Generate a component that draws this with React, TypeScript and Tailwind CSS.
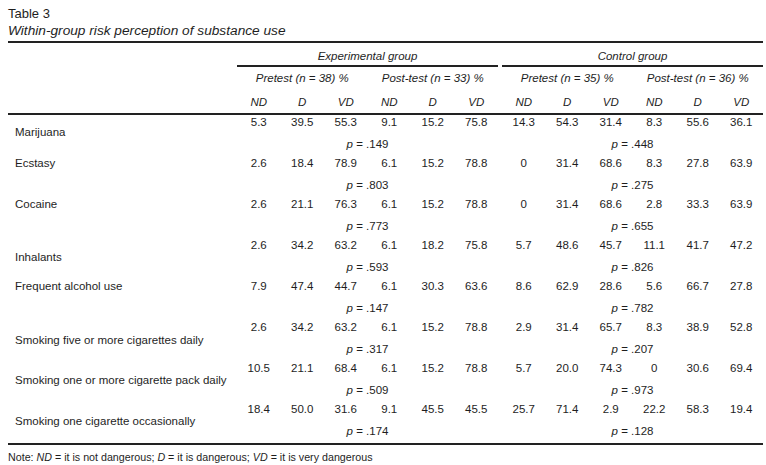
const rows = [
  { label: "Marijuana", off: 10, pe: ".149", pc: ".448", v: ["5.3", "39.5", "55.3", "9.1", "15.2", "75.8", "14.3", "54.3", "31.4", "8.3", "55.6", "36.1"] },
  { label: "Ecstasy", off: 0, pe: ".803", pc: ".275", v: ["2.6", "18.4", "78.9", "6.1", "15.2", "78.8", "0", "31.4", "68.6", "8.3", "27.8", "63.9"] },
  { label: "Cocaine", off: 0, pe: ".773", pc: ".655", v: ["2.6", "21.1", "76.3", "6.1", "15.2", "78.8", "0", "31.4", "68.6", "2.8", "33.3", "63.9"] },
  { label: "Inhalants", off: 12, pe: ".593", pc: ".826", v: ["2.6", "34.2", "63.2", "6.1", "18.2", "75.8", "5.7", "48.6", "45.7", "11.1", "41.7", "47.2"] },
  { label: "Frequent alcohol use", off: 0, pe: ".147", pc: ".782", v: ["7.9", "47.4", "44.7", "6.1", "30.3", "63.6", "8.6", "62.9", "28.6", "5.6", "66.7", "27.8"] },
  { label: "Smoking five or more cigarettes daily", off: 13, pe: ".317", pc: ".207", v: ["2.6", "34.2", "63.2", "6.1", "15.2", "78.8", "2.9", "31.4", "65.7", "8.3", "38.9", "52.8"] },
  { label: "Smoking one or more cigarette pack daily", off: 12, pe: ".509", pc: ".973", v: ["10.5", "21.1", "68.4", "6.1", "15.2", "78.8", "5.7", "20.0", "74.3", "0", "30.6", "69.4"] },
  { label: "Smoking one cigarette occasionally", off: 12, pe: ".174", pc: ".128", v: ["18.4", "50.0", "31.6", "9.1", "45.5", "45.5", "25.7", "71.4", "2.9", "22.2", "58.3", "19.4"] },
];

const sub = ["ND", "D", "VD"];

// label offset from the top of its block (px)
const offClass: Record<number, string> = {
  0: "",
  10: "pt-[10px]",
  12: "pt-[12px]",
  13: "pt-[13px]",
};

const Cells = ({ items, italic }: { items: string[]; italic?: boolean }) => (
  <div className="flex">
    {items.map((t, i) => (
      <div key={i} className={`w-[43.5px] text-center ${italic ? "italic" : ""}`}>
        {t}
      </div>
    ))}
  </div>
);

const P = ({ value }: { value: string }) => (
  <div className="w-[261px] text-center">
    <span className="italic">p</span> = {value}
  </div>
);

export default function App() {
  return (
    <div className="w-[766px] h-[465px] bg-white px-[8px] font-['Liberation_Sans',Arial,sans-serif] text-[#1e1e1e]">
      {/* Caption */}
      <div className="pt-[6px] mb-[1px]">
        <div className="text-[13px] leading-[16px]">Table 3</div>
        <div className="text-[13.7px] leading-[18px] italic">Within-group risk perception of substance use</div>
      </div>

      <div className="w-[755px] border-t-2 border-[#222] text-[11.5px] leading-[14px]">
        {/* Group headers */}
        <div className="flex h-[24px]">
          <div className="w-[229px]" />
          <div className="w-[261px] border-b-2 border-[#222] pt-[4px] flex items-center justify-center italic">
            Experimental group
          </div>
          <div className="w-[4px]" />
          <div className="w-[261px] border-b-2 border-[#222] pt-[4px] flex items-center justify-center italic">
            Control group
          </div>
        </div>

        {/* Test headers */}
        <div className="flex h-[21px] items-center italic">
          <div className="w-[229px]" />
          <div className="w-[130.5px] text-center">Pretest (n = 38) %</div>
          <div className="w-[130.5px] text-center">Post-test (n = 33) %</div>
          <div className="w-[4px]" />
          <div className="w-[130.5px] text-center">Pretest (n = 35) %</div>
          <div className="w-[130.5px] text-center">Post-test (n = 36) %</div>
        </div>

        {/* ND / D / VD */}
        <div className="flex h-[27px] pt-[3px] items-center border-b-2 border-[#222]">
          <div className="w-[229px]" />
          <Cells items={[...sub, ...sub]} italic />
          <div className="w-[4px]" />
          <Cells items={[...sub, ...sub]} italic />
        </div>

        {/* Body */}
        <div className="border-b-2 border-[#222]">
          {rows.map((r) => (
            <div key={r.label} className="flex h-[41px]">
              <div className={`w-[229px] pl-[7px] ${offClass[r.off]}`}>{r.label}</div>
              <div className="flex flex-col">
                <div className="flex h-[22px]">
                  <Cells items={r.v.slice(0, 6)} />
                  <div className="w-[4px]" />
                  <Cells items={r.v.slice(6)} />
                </div>
                <div className="flex h-[19px]">
                  <P value={r.pe} />
                  <div className="w-[4px]" />
                  <P value={r.pc} />
                </div>
              </div>
            </div>
          ))}
        </div>

        <div className="pt-[5px] text-[10.7px] leading-[14px]">
          Note: <span className="italic">ND</span> = it is not dangerous; <span className="italic">D</span> = it is dangerous;{" "}
          <span className="italic">VD</span> = it is very dangerous
        </div>
      </div>
    </div>
  );
}
